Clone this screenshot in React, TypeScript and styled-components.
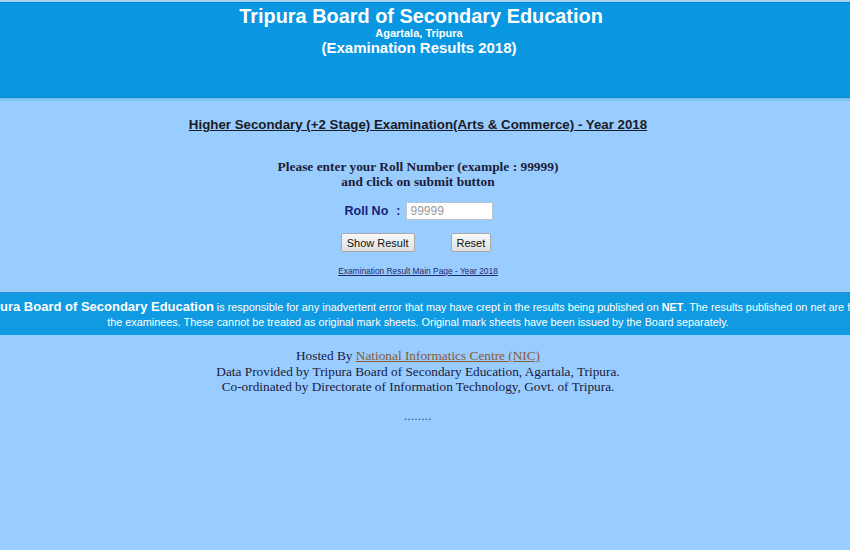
import styled, { createGlobalStyle } from "styled-components";

const GlobalStyle = createGlobalStyle`
  html, body {
    margin: 0;
    padding: 0;
    background-color: #99ccff;
    overflow: hidden;
  }
  body {
    font-family: "Liberation Sans", Arial, sans-serif;
  }
`;

const App = () => {
  return (
    <Page>
      <GlobalStyle />
      <Header>
        <Title>Tripura Board of Secondary Education</Title>
        <Place>Agartala, Tripura</Place>
        <SubTitle>(Examination Results 2018)</SubTitle>
      </Header>

      <Main>
        <ExamName>
          Higher Secondary (+2 Stage) Examination(Arts &amp; Commerce) - Year
          2018
        </ExamName>

        <Prompt>
          Please enter your Roll Number (example : 99999)
          <br />
          and click on submit button
        </Prompt>

        <Form onSubmit={(e) => e.preventDefault()}>
          <FieldRow>
            <Label htmlFor="roll">
              Roll No <Colon>:</Colon>
            </Label>
            <RollInput id="roll" placeholder="99999" />
          </FieldRow>
          <ButtonRow>
            <Button type="submit">Show Result</Button>
            <Button type="reset">Reset</Button>
          </ButtonRow>
        </Form>

        <SmallLink href="#">Examination Result Main Page - Year 2018</SmallLink>
      </Main>

      <Notice>
        <NoticeLine>
          <strong>Tripura Board of Secondary Education</strong>
          &nbsp;is responsible for any inadvertent error that may have crept in
          the results being published on&nbsp;<b>NET</b>. The results published
          on net are for
        </NoticeLine>
        <NoticeLine>
          the examinees. These cannot be treated as original mark sheets.
          Original mark sheets have been issued by the Board separately.
        </NoticeLine>
      </Notice>

      <Footer>
        <div>
          Hosted By{" "}
          <FooterLink href="#">National Informatics Centre (NIC) </FooterLink>
        </div>
        <div>
          Data Provided by Tripura Board of Secondary Education, Agartala,
          Tripura.
        </div>
        <div>
          Co-ordinated by Directorate of Information Technology, Govt. of
          Tripura.
        </div>
        <Dots>........</Dots>
      </Footer>
    </Page>
  );
};

const Page = styled.div`
  width: 850px;
  height: 550px;
  display: flex;
  flex-direction: column;
`;

const Header = styled.header`
  height: 96px;
  background-color: #0997e2;
  border-top: 2px solid #a8d2f4;
  border-bottom: 3px solid #7cc3f3;
  box-shadow: inset 0 1px 0 #0786cc, inset 0 -1px 0 #0786cc;
  padding-right: 12px;
  display: flex;
  flex-direction: column;
  align-items: center;
  color: #ffffff;
  font-weight: bold;
`;

const Title = styled.div`
  font-size: 19.9px;
  line-height: 24px;
  margin-top: 2px;
  padding-left: 4px;
`;

const Place = styled.div`
  font-size: 11px;
  line-height: 12px;
  margin-top: -1px;
`;

const SubTitle = styled.div`
  font-size: 15px;
  line-height: 17px;
`;

const Main = styled.main`
  padding-right: 14px;
  display: flex;
  flex-direction: column;
  align-items: center;
  height: 191px;
`;

const ExamName = styled.div`
  margin-top: 16px;
  font-size: 13.3px;
  font-weight: bold;
  text-decoration: underline;
  color: #1b1b24;
`;

const Prompt = styled.div`
  margin-top: 27px;
  font-family: "Liberation Serif", "Times New Roman", serif;
  font-size: 13.4px;
  line-height: 15px;
  font-weight: bold;
  text-align: center;
  color: #1c1c38;
`;

const Form = styled.form`
  margin-top: 13px;
  display: flex;
  flex-direction: column;
  align-items: center;
  gap: 13px;
`;

const FieldRow = styled.div`
  display: flex;
  align-items: center;
  gap: 5px;
  margin-left: 2px;
`;

const Label = styled.label`
  display: flex;
  align-items: center;
  gap: 8px;
  font-size: 12.5px;
  font-weight: bold;
  color: #14237a;
`;

const Colon = styled.span`
  padding-right: 1px;
`;

const RollInput = styled.input`
  box-sizing: border-box;
  width: 87px;
  height: 18px;
  padding: 1px 3px;
  border: 1px solid #b8c4d0;
  background: #ffffff;
  font-family: "Liberation Sans", Arial, sans-serif;
  font-size: 12px;
  &::placeholder {
    color: #9a9a9a;
  }
`;

const ButtonRow = styled.div`
  display: flex;
  gap: 36px;
  margin-right: 4px;
`;

const Button = styled.button`
  height: 19px;
  padding: 0 5px;
  font-family: "Liberation Sans", Arial, sans-serif;
  font-size: 11px;
  color: #111111;
  background: linear-gradient(#f8f8f8, #e0e0e0);
  border: 1px solid #a9a9a9;
  border-radius: 2px;
`;

const SmallLink = styled.a`
  margin-top: 14px;
  font-size: 8.4px;
  color: #1d2a6e;
  text-decoration: underline;
`;

const Notice = styled.section`
  height: 42px;
  background-color: #0f9ae2;
  border-top: 1px solid #2a8fd0;
  color: #ffffff;
  padding-right: 14px;
  display: flex;
  flex-direction: column;
  justify-content: center;
  overflow: hidden;
`;

const NoticeLine = styled.div`
  display: flex;
  justify-content: center;
  align-items: baseline;
  white-space: pre;
  font-size: 10.85px;
  line-height: 15px;

  strong {
    font-size: 13px;
  }
`;

const Footer = styled.footer`
  padding-right: 14px;
  margin-top: 13px;
  display: flex;
  flex-direction: column;
  align-items: center;
  font-family: "Liberation Serif", "Times New Roman", serif;
  font-size: 13.3px;
  line-height: 15.5px;
  color: #1a1a3c;
`;

const FooterLink = styled.a`
  color: #8a5a30;
  text-decoration: underline;
`;

const Dots = styled.div`
  margin-top: 14px;
  font-size: 12px;
  letter-spacing: 0.5px;
  color: #3a4a66;
`;

export default App;
